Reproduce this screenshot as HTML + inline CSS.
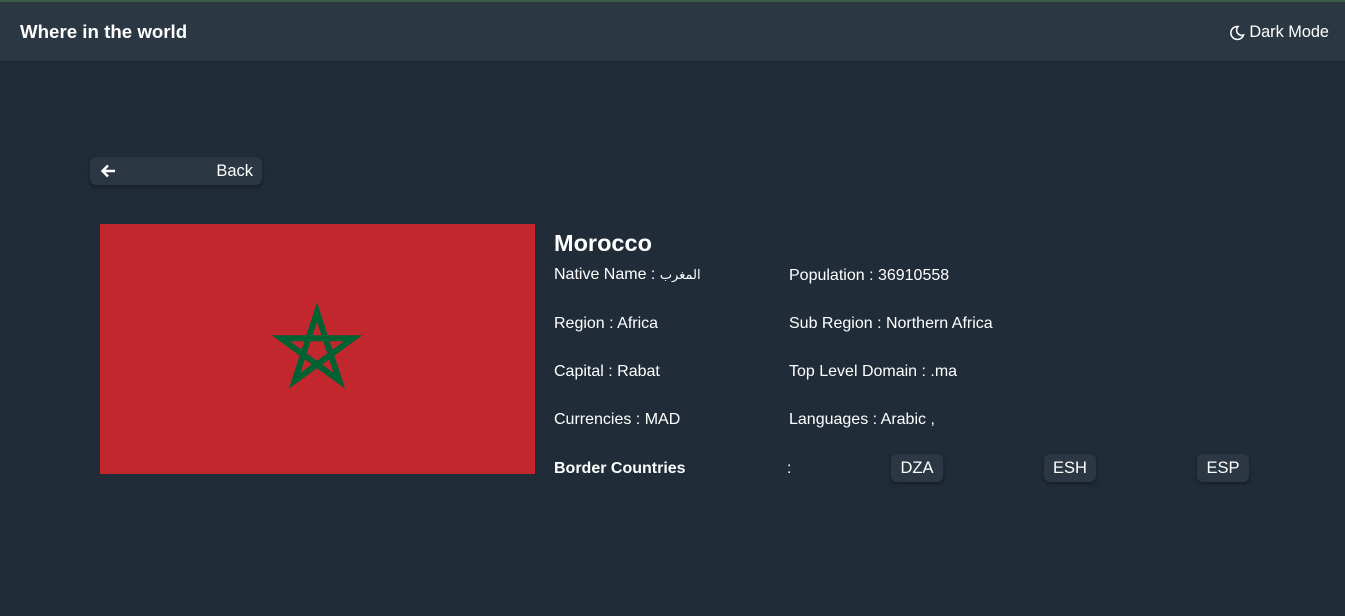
<!DOCTYPE html>
<html><head><meta charset="utf-8"><style>
*{margin:0;padding:0;box-sizing:border-box}
body{width:1345px;height:616px;background:#202c37;font-family:"Liberation Sans",Arial,sans-serif;color:#fff;position:relative;overflow:hidden}
.hdr{position:absolute;left:0;top:0;width:1345px;height:61px;background:#2b3743;border-top:2px solid #3c5a44;box-shadow:0 1px 3px rgba(0,0,0,.2)}
.hdr h1{position:absolute;left:20px;top:19px;font-size:18.7px;font-weight:bold}
.dm{position:absolute;right:16px;top:21px;font-size:16.3px;display:flex;align-items:center;gap:4px}
.back{position:absolute;left:90px;top:157px;width:172px;height:28px;background:#2b3743;border-radius:6px;box-shadow:0 2px 4px rgba(0,0,0,.35);font-size:16.5px}
.back span{position:absolute;right:9px;top:5px}
.back svg{position:absolute;left:10px;top:7px}
.flag{position:absolute;left:100px;top:224px;width:435px;height:250px;background:#c1272d}
.t{position:absolute;font-size:16px;white-space:nowrap}
h2{position:absolute;left:554px;top:230px;font-size:23.5px;font-weight:bold}
.bc{position:absolute;top:454px;height:28px;width:52px;text-align:center;background:#2b3743;border-radius:6px;box-shadow:0 2px 4px rgba(0,0,0,.35);font-size:16.5px;line-height:28px}
</style></head><body>
<div class="hdr"><h1>Where in the world</h1>
<div class="dm"><svg width="16" height="16" viewBox="0 0 16 16"><path d="M9 1.5A6.5 6.5 0 1 0 14.5 10 5.2 5.2 0 0 1 9 1.5Z" fill="none" stroke="#fff" stroke-width="1.5"/></svg>Dark Mode</div></div>
<div class="back"><svg width="16" height="14" viewBox="0 0 16 14"><path d="M15 7H3M8 1.5 2.5 7 8 12.5" fill="none" stroke="#fff" stroke-width="2.5"/></svg><span>Back</span></div>
<div class="flag"><svg width="435" height="250"><polygon points="217,88 239.3,156.7 180.9,114.3 253.1,114.3 194.7,156.7" fill="none" stroke="#006233" stroke-width="6"/></svg></div>
<h2>Morocco</h2>
<div class="t" style="left:554px;top:266px">Native Name : <span style="font-family:'DejaVu Sans',sans-serif;font-size:13px">المغرب</span></div>
<div class="t" style="left:789px;top:267px">Population : 36910558</div>
<div class="t" style="left:554px;top:315px">Region : Africa</div>
<div class="t" style="left:789px;top:315px">Sub Region : Northern Africa</div>
<div class="t" style="left:554px;top:363px">Capital : Rabat</div>
<div class="t" style="left:789px;top:363px">Top Level Domain : .ma</div>
<div class="t" style="left:554px;top:411px">Currencies : MAD</div>
<div class="t" style="left:789px;top:411px">Languages : Arabic ,</div>
<div class="t" style="left:554px;top:460px;font-weight:bold">Border Countries</div>
<div class="t" style="left:787px;top:460px">:</div>
<div class="bc" style="left:891px">DZA</div>
<div class="bc" style="left:1044px">ESH</div>
<div class="bc" style="left:1197px">ESP</div>
</body></html>
